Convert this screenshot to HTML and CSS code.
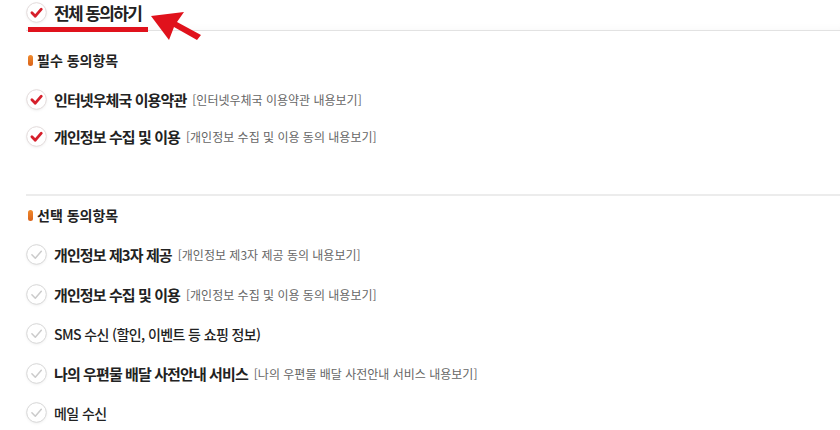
FILE: index.html
```html
<!DOCTYPE html>
<html lang="ko">
<head>
    <meta charset="UTF-8">
    <title>약관 동의</title>
    <link rel="stylesheet" href="styles.css">
</head>
<body>
    <div class="agree-all">
        <label class="agree-all-label">
            <svg class="check on" viewBox="0 0 21 21"><circle cx="10.5" cy="10.5" r="9.8"/><path d="M5.9 10.7 L9.3 14.2 L15.3 7.2"/></svg>
            <span class="agree-all-text">전체 동의하기</span>
        </label>
        <span class="mark-bar"></span>
        <svg class="mark-arrow" viewBox="0 0 52 30"><polygon points="1,4 34,0 27,10 51,23 47,28 24,15 19,28"/></svg>
    </div>

    <div class="section required">
        <h3 class="section-title"><span class="pill"></span>필수 동의항목</h3>
        <ul class="terms">
            <li class="term">
                <svg class="check on" viewBox="0 0 21 21"><circle cx="10.5" cy="10.5" r="9.8"/><path d="M5.9 10.7 L9.3 14.2 L15.3 7.2"/></svg>
                <span class="term-name">인터넷우체국 이용약관</span>
                <a class="term-link" href="#">[인터넷우체국 이용약관 내용보기]</a>
            </li>
            <li class="term">
                <svg class="check on" viewBox="0 0 21 21"><circle cx="10.5" cy="10.5" r="9.8"/><path d="M5.9 10.7 L9.3 14.2 L15.3 7.2"/></svg>
                <span class="term-name">개인정보 수집 및 이용</span>
                <a class="term-link" href="#">[개인정보 수집 및 이용 동의 내용보기]</a>
            </li>
        </ul>
    </div>

    <div class="section optional">
        <h3 class="section-title"><span class="pill"></span>선택 동의항목</h3>
        <ul class="terms">
            <li class="term">
                <svg class="check" viewBox="0 0 21 21"><circle cx="10.5" cy="10.5" r="9.8"/><path d="M5.9 10.7 L9.3 14.2 L15.3 7.2"/></svg>
                <span class="term-name">개인정보 제3자 제공</span>
                <a class="term-link" href="#">[개인정보 제3자 제공 동의 내용보기]</a>
            </li>
            <li class="term">
                <svg class="check" viewBox="0 0 21 21"><circle cx="10.5" cy="10.5" r="9.8"/><path d="M5.9 10.7 L9.3 14.2 L15.3 7.2"/></svg>
                <span class="term-name">개인정보 수집 및 이용</span>
                <a class="term-link" href="#">[개인정보 수집 및 이용 동의 내용보기]</a>
            </li>
            <li class="term">
                <svg class="check" viewBox="0 0 21 21"><circle cx="10.5" cy="10.5" r="9.8"/><path d="M5.9 10.7 L9.3 14.2 L15.3 7.2"/></svg>
                <span class="term-name light">SMS 수신 (할인, 이벤트 등 쇼핑 정보)</span>
            </li>
            <li class="term">
                <svg class="check" viewBox="0 0 21 21"><circle cx="10.5" cy="10.5" r="9.8"/><path d="M5.9 10.7 L9.3 14.2 L15.3 7.2"/></svg>
                <span class="term-name">나의 우편물 배달 사전안내 서비스</span>
                <a class="term-link" href="#">[나의 우편물 배달 사전안내 서비스 내용보기]</a>
            </li>
            <li class="term">
                <svg class="check" viewBox="0 0 21 21"><circle cx="10.5" cy="10.5" r="9.8"/><path d="M5.9 10.7 L9.3 14.2 L15.3 7.2"/></svg>
                <span class="term-name light">메일 수신</span>
            </li>
        </ul>
    </div>
</body>
</html>
```

FILE: styles.css
```css
body {
    margin: 0;
    padding: 0 0 0 26px;
    background: #fff;
    color: #222;
    font-family: "Noto Sans CJK KR", "Noto Sans", sans-serif;
}

ul {
    list-style: none;
    margin: 0;
    padding: 0;
}

/* check circle */
.check {
    width: 21px;
    height: 21px;
    flex: none;
    filter: drop-shadow(0 1px 1px rgba(0, 0, 0, 0.06));
}
.check circle {
    fill: #fff;
    stroke: #d6d6d6;
    stroke-width: 1;
}
.check path {
    fill: none;
    stroke: #cbcbcb;
    stroke-width: 1.5;
    stroke-linecap: round;
    stroke-linejoin: round;
}
.check.on circle {
    stroke: #e2dada;
}
.check.on path {
    stroke: #d61f2b;
    stroke-width: 2.8;
}

/* top: agree all */
.agree-all {
    position: relative;
    height: 30px;
    border-bottom: 1px solid #e2e2e2;
    box-shadow: 0 -6px 8px -6px rgba(0, 0, 0, 0.04) inset;
}
.agree-all-label {
    display: flex;
    align-items: center;
    gap: 7px;
    height: 24px;
}
.agree-all-text {
    font-size: 17px;
    font-weight: bold;
    letter-spacing: -1.6px;
    color: #222;
}

/* red annotation */
.mark-bar {
    position: absolute;
    left: 2px;
    top: 27px;
    width: 120px;
    height: 5px;
    background: #e0121c;
}
.mark-arrow {
    position: absolute;
    left: 124px;
    top: 12px;
    width: 52px;
    height: 30px;
}
.mark-arrow polygon {
    fill: #e0121c;
}

/* sections */
.section-title {
    display: flex;
    align-items: center;
    gap: 4px;
    margin: 0;
    height: 20px;
    font-size: 14px;
    font-weight: bold;
    letter-spacing: 0;
    color: #222;
}
.pill {
    width: 5px;
    height: 11px;
    border-radius: 3px;
    background: linear-gradient(#f08a2c, #d9621a);
    margin-left: 2px;
}

.required {
    padding: 19px 0 39px;
    border-bottom: 2px solid #ececec;
}
.required .terms {
    margin-top: 11px;
}
.required .term {
    height: 37px;
}

.optional {
    padding-top: 9px;
}
.optional .terms {
    margin-top: 10px;
}
.optional .term {
    height: 39.5px;
}

.term {
    display: flex;
    align-items: center;
    gap: 7px;
}
.term-name {
    font-size: 15px;
    font-weight: bold;
    letter-spacing: -0.9px;
    color: #222;
}
.term-name.light {
    font-size: 14px;
    font-weight: 500;
    letter-spacing: -0.6px;
    color: #222;
}
.term-link {
    margin-left: -1px;
    font-size: 12px;
    letter-spacing: 0;
    color: #666;
    text-decoration: none;
}
```
